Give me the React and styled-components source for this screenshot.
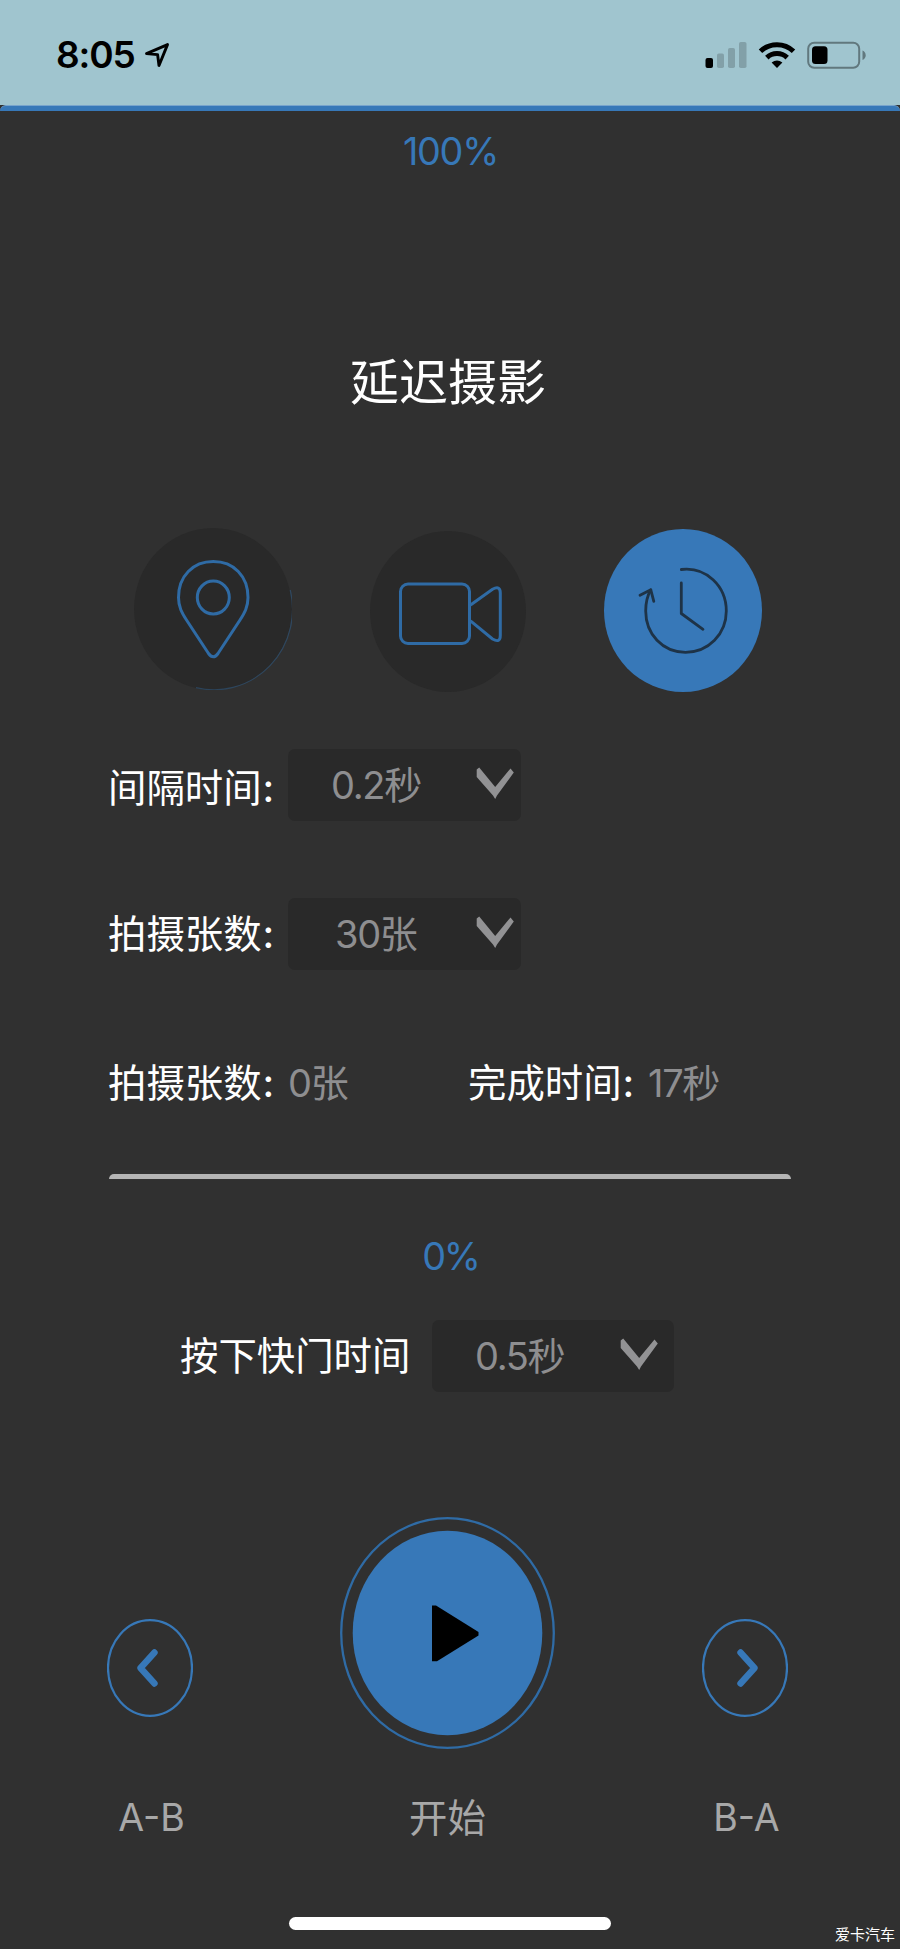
import React from "react";
import styled, { createGlobalStyle } from "styled-components";

const BLUE = "#3778b8";
const LINE_BLUE = "#2f6ba5";
const DARK = "#303030";
const PANEL = "#292929";

const GlobalStyle = createGlobalStyle`
  *, *::before, *::after { box-sizing: border-box; }
  body { margin: 0; background: ${DARK}; }
  svg { display: block; flex: none; }
`;

const Screen = styled.main`
  position: relative;
  display: flex;
  flex-direction: column;
  width: 900px;
  height: 1949px;
  overflow: hidden;
  background: ${DARK};
  font-family: Inter, "Noto Sans CJK SC", sans-serif;
  font-size: 38.4px;
  line-height: 40px;
  white-space: nowrap;
`;

const StatusBar = styled.header`
  display: flex;
  justify-content: space-between;
  flex: none;
  height: 105px;
  padding: 35px 33px 0 56px;
  background: #a0c5cf;
  color: #000;
`;

const Clock = styled.div`
  display: flex;
  gap: 9px;
  font-size: 37px;
  font-weight: 600;
  letter-spacing: -1.1px;
`;

const StatusIcons = styled.div`
  display: flex;
  gap: 11px;
  padding-top: 5px;
`;

const BatteryTrack = styled.div`
  flex: none;
  height: 6px;
  border-top: 1px solid #78a4cc;
  border-radius: 6px 6px 0 0;
  background: ${BLUE};
`;

const Percent = styled.p`
  flex: none;
  height: 40px;
  margin: ${(p) => p.$top}px 0 0;
  padding-left: 1px;
  color: ${BLUE};
  font-size: 37.8px;
  text-align: center;
  letter-spacing: ${(p) => p.$spacing}px;
`;

const Title = styled.h1`
  height: 60px;
  margin: 182px 0 0 350px;
  font-size: 49px;
  font-weight: 400;
  line-height: 60px;
  color: #fff;
`;

const Modes = styled.nav`
  display: flex;
  gap: 78px;
  height: 164px;
  margin-top: 114px;
  padding-left: 134px;
`;

const ModeButton = styled.button`
  flex: none;
  width: ${(p) => p.$w}px;
  height: ${(p) => p.$h}px;
  margin: ${(p) => p.$drop}px 0 0;
  padding: 0;
  border: 0;
  border-radius: 50%;
  background: ${(p) => (p.$active ? BLUE : PANEL)};
`;

const Row = styled.div`
  display: flex;
  align-items: center;
  flex: none;
  height: ${(p) => p.$height || 72}px;
  margin-top: ${(p) => p.$top}px;
  padding-left: ${(p) => p.$left || 108}px;
`;

const Label = styled.span`
  width: ${(p) => p.$w}px;
  padding-top: ${(p) => p.$drop || 0}px;
  color: #fff;
`;

const Colon = styled.span`
  margin-left: 1px;
  font-weight: 500;
`;

const Value = styled.span`
  width: ${(p) => (p.$w ? `${p.$w}px` : "auto")};
  color: #8e8e90;
  font-size: 38px;
  letter-spacing: -1.3px;
`;

const Select = styled.div`
  display: flex;
  align-items: center;
  justify-content: space-between;
  width: ${(p) => p.$w || 233}px;
  height: 72px;
  padding: 0 ${(p) => p.$right || 7}px 0 ${(p) => p.$left}px;
  border-radius: 7px;
  background: ${PANEL};
`;

const Progress = styled.div`
  flex: none;
  width: 682px;
  height: 5px;
  margin: 71px 0 0 109px;
  border-radius: 5px 5px 0 0;
  background: #b4b4b4;
`;

const Controls = styled.div`
  display: flex;
  justify-content: space-between;
  flex: none;
  height: 320px;
  margin-top: 125px;
  padding: 0 112px 0 107px;
`;

const Control = styled.div`
  display: flex;
  flex-direction: column;
  align-items: center;
  padding-top: ${(p) => p.$drop || 0}px;
`;

const ControlLabel = styled.span`
  height: 40px;
  margin-top: ${(p) => p.$top}px;
  padding-left: ${(p) => p.$shift || 0}px;
  color: #a8a8a8;
  font-size: ${(p) => p.$size || 38.4}px;
`;

const HomeIndicator = styled.div`
  flex: none;
  width: 322px;
  height: 13px;
  margin: 80px 0 0 289px;
  border-radius: 7px;
  background: #fff;
`;

const Watermark = styled.div`
  position: absolute;
  right: 5px;
  bottom: 4px;
  color: #fff;
  font-size: 15px;
  line-height: 20px;
`;

const ArrowMark = styled.svg`
  margin-top: 7px;
`;

const ChevronMark = styled.svg`
  margin-top: -4px;
`;

const LocationIcon = () => (
  <ArrowMark width="26" height="27" viewBox="0 0 26 27">
    <path d="M2.5 11.6 23.5 2.6 15 23.5 13.6 12.6Z" fill="none" stroke="#000" strokeWidth="2.9" strokeLinejoin="round" />
  </ArrowMark>
);

const SignalIcon = () => (
  <svg width="42" height="30" viewBox="0 0 42 30">
    <rect x="0.5" y="18" width="7.5" height="10" rx="2" fill="#000" />
    <g fill="#82a0a8">
      <rect x="12" y="13.5" width="7" height="14.5" rx="1.8" />
      <rect x="23" y="8" width="7" height="20" rx="1.8" />
      <rect x="34" y="2" width="7.5" height="26" rx="1.8" />
    </g>
  </svg>
);

const WifiIcon = () => (
  <svg width="38" height="30" viewBox="0 0 38 30">
    <g fill="none" stroke="#000" strokeWidth="5">
      <path d="M2.5 11.2A24 24 0 0 1 35.5 11.2" />
      <path d="M8.8 17.6A15 15 0 0 1 29.2 17.6" />
    </g>
    <path d="M19 28 13.6 22.6Q19 18.2 24.4 22.6Z" fill="#000" />
  </svg>
);

const BatteryIcon = () => (
  <svg width="60" height="30" viewBox="0 0 60 30">
    <rect x="1.2" y="2.7" width="51" height="25" rx="6" fill="none" stroke="#61787e" strokeWidth="2" />
    <rect x="5" y="6.3" width="15.5" height="17.7" rx="3.5" fill="#000" />
    <path d="M55.5 10.5Q58.7 12 58.7 15.2T55.5 20Z" fill="#61787e" />
  </svg>
);

const PinIcon = () => (
  <svg width="158" height="162" viewBox="0 0 158 162" fill="none" stroke={LINE_BLUE} strokeWidth="3">
    <path d="M156.2 62A78.4 80.4 0 0 1 62 159.6" strokeWidth="1.2" opacity=".4" />
    <path d="M44.5 69.5C44.5 48 59 33.5 79.3 33.5S114 48 114 69.5C114 79 110.5 85 106 92L84 125.5Q79.3 132 74.5 125.5L52.5 92C48 85 44.5 79 44.5 69.5Z" />
    <ellipse cx="79.3" cy="69.5" rx="16" ry="16.5" />
  </svg>
);

const VideoIcon = () => (
  <svg width="156" height="161" viewBox="0 0 156 161" fill="none" stroke={LINE_BLUE} strokeWidth="3">
    <rect x="30.5" y="53" width="69" height="59.5" rx="7.5" />
    <path d="M100.5 74 122.5 58.3Q130.3 54 130.3 62V104.5Q130.3 112.5 122.5 108L100.5 89.8" />
  </svg>
);

const TimelapseIcon = () => (
  <svg width="158" height="163" viewBox="0 0 158 163" fill="none" stroke="#1e3347" strokeWidth="2.8" strokeLinecap="round" strokeLinejoin="round">
    <path d="M77.3 40.5C102 37.5 122.3 57 122.3 82C122.3 105 104.5 123.3 81.5 123.3S41.7 105 41.7 82C41.7 74 43.2 67 46.7 61" />
    <path d="M36 66.2 46.8 60.8 49.8 72.3" />
    <path d="M77.3 54V84.5L99 100.3" />
  </svg>
);

const Chevron = () => (
  <ChevronMark width="38" height="34" viewBox="0 0 38 34" fill="#929294">
    <path d="M.7 3.5 3.2 1.5 19.2 21 34.5 2.5 37.8 6.5 21 29.5 19.2 33 17 29.5 .7 11Z" />
  </ChevronMark>
);

const ArrowButton = ({ flip }) => (
  <svg width="86" height="98" viewBox="0 0 86 98" fill="none" stroke={BLUE}>
    <ellipse cx="43" cy="49" rx="42" ry="47.8" strokeWidth="2.2" />
    <path
      d={flip ? "M38.5 33.5 52.5 49 38.5 64.5" : "M47.5 33.5 33.5 49 47.5 64.5"}
      strokeWidth="6.4"
      strokeLinecap="round"
      strokeLinejoin="round"
    />
  </svg>
);

const PlayButton = () => (
  <svg width="216" height="232" viewBox="0 0 216 232">
    <ellipse cx="107.5" cy="116" rx="106.3" ry="114.8" fill="none" stroke={LINE_BLUE} strokeWidth="2.3" />
    <ellipse cx="107.5" cy="116" rx="94.8" ry="102.3" fill={BLUE} />
    <path d="M92 88.5H96L138.5 115V118.5L97 144.3H92Z" fill="#000" />
  </svg>
);

export default function App() {
  return (
    <>
      <GlobalStyle />
      <Screen>
        <StatusBar>
          <Clock>
            8:05
            <LocationIcon />
          </Clock>
          <StatusIcons>
            <SignalIcon />
            <WifiIcon />
            <BatteryIcon />
          </StatusIcons>
        </StatusBar>
        <BatteryTrack />
        <Percent $top={20} $spacing={-1.3}>100%</Percent>
        <Title>延迟摄影</Title>
        <Modes>
          <ModeButton $w={158} $h={162} $drop={1}><PinIcon /></ModeButton>
          <ModeButton $w={156} $h={161} $drop={4}><VideoIcon /></ModeButton>
          <ModeButton $w={158} $h={163} $drop={2} $active><TimelapseIcon /></ModeButton>
        </Modes>
        <Row $top={58}>
          <Label $w={180} $drop={5}>间隔时间<Colon>:</Colon></Label>
          <Select $left={43}><Value>0.2秒</Value><Chevron /></Select>
        </Row>
        <Row $top={77}>
          <Label $w={180}>拍摄张数<Colon>:</Colon></Label>
          <Select $left={47}><Value>30张</Value><Chevron /></Select>
        </Row>
        <Row $top={93} $height={40}>
          <Label $w={180}>拍摄张数<Colon>:</Colon></Label>
          <Value $w={180}>0张</Value>
          <Label $w={180}>完成时间<Colon>:</Colon></Label>
          <Value>17秒</Value>
        </Row>
        <Progress />
        <Percent $top={57} $spacing={-2.2}>0%</Percent>
        <Row $top={44} $left={180}>
          <Label $w={252}>按下快门时间</Label>
          <Select $w={242} $left={43} $right={16}><Value>0.5秒</Value><Chevron /></Select>
        </Row>
        <Controls>
          <Control $drop={102}><ArrowButton /><ControlLabel $top={81} $size={37.5} $shift={3}>A-B</ControlLabel></Control>
          <Control><PlayButton /><ControlLabel $top={49}>开始</ControlLabel></Control>
          <Control $drop={102}><ArrowButton flip /><ControlLabel $top={81} $size={37.5} $shift={3}>B-A</ControlLabel></Control>
        </Controls>
        <HomeIndicator />
        <Watermark>爱卡汽车</Watermark>
      </Screen>
    </>
  );
}
